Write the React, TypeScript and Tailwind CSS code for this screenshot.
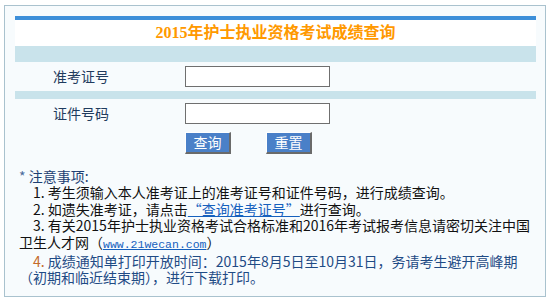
import React from "react";

const cjk = { fontFamily: '"Noto Sans CJK SC", "Noto Sans", sans-serif' };

export default function App() {
  return (
    <div className="w-[548px] h-[300px] bg-white pt-[5px] pl-[4px]">
      <div className="w-[542px] h-[292px] border border-[#a9c2ce] bg-[#f7fbfd] pt-[10px] pl-[10px]">
        <div className="w-[521px]">
          <div className="h-[4px] bg-[#3d8fd9]" />
          <div
            className="h-[26px] bg-white flex items-center justify-center text-[16px] font-bold text-[#ff9900]"
            style={{ fontFamily: '"Liberation Serif", "Noto Sans CJK SC", serif' }}
          >
            2015年护士执业资格考试成绩查询
          </div>
          <div className="h-[16px] bg-[#c9e3eb]" />
          <div className="h-[29px] flex items-center">
            <div className="w-[170px] pl-[38px] text-[14px] text-[#1f3b5e]" style={cjk}>
              准考证号
            </div>
            <div className="w-[145px] h-[21px] bg-white border border-[#6f6f6f]" />
          </div>
          <div className="h-[8px] bg-[#c9e3eb]" />
          <div className="h-[29px] flex items-center">
            <div className="w-[170px] pl-[38px] text-[14px] text-[#1f3b5e]" style={cjk}>
              证件号码
            </div>
            <div className="w-[145px] h-[21px] bg-white border border-[#6f6f6f]" />
          </div>
          <div className="h-[29px] pl-[170px] pt-[4px] flex gap-[35px]">
            {["查询", "重置"].map((t) => (
              <div
                key={t}
                className="w-[46px] h-[22px] bg-[#4a80c8] border-t border-l border-t-white border-l-white border-b-2 border-r-2 border-b-[#6a6a6a] border-r-[#6a6a6a] flex items-center justify-center text-white text-[14px]"
                style={cjk}
              >
                {t}
              </div>
            ))}
          </div>
          <div
            className="mt-[11px] pl-[4px] text-[14px] leading-[16.4px] text-[#111] whitespace-nowrap"
            style={cjk}
          >
            <div>
              <span className="text-[#4a6a9a]">*</span>
              <span className="text-[#1d3f73]">{"\u00a0"}注意事项:</span>
            </div>
            <div className="pl-[14px]">1. 考生须输入本人准考证上的准考证号和证件号码，进行成绩查询。</div>
            <div className="pl-[14px]">
              2. 如遗失准考证，请点击
              <span className="text-[#1560bd] underline">“查询准考证号”</span>
              进行查询。
            </div>
            <div className="pl-[14px]">3. 有关2015年护士执业资格考试合格标准和2016年考试报考信息请密切关注中国</div>
            <div>
              卫生人才网（
              <span
                className="text-[#1560bd] underline text-[11.5px]"
                style={{ fontFamily: '"Liberation Mono", monospace' }}
              >
                www.21wecan.com
              </span>
              ）
            </div>
            <div className="pl-[14px] text-[#1f4b85]">
              <span className="text-[#c46a2a]">4.</span> 成绩通知单打印开放时间：2015年8月5日至10月31日，务请考生避开高峰期
            </div>
            <div className="text-[#1f4b85]">（初期和临近结束期），进行下载打印。</div>
          </div>
        </div>
      </div>
    </div>
  );
}
